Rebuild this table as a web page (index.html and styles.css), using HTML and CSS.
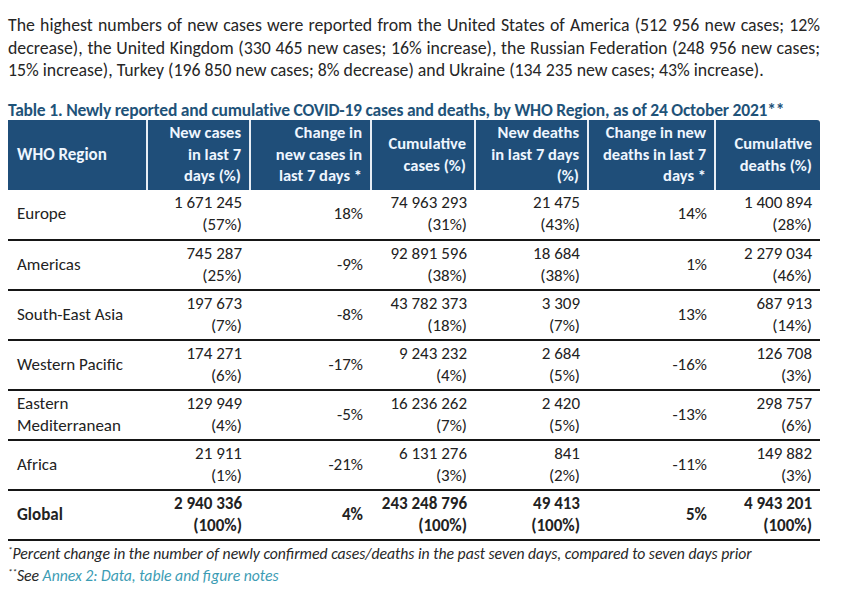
FILE: index.html
```html
<!DOCTYPE html>
<html lang="en">
<head>
<meta charset="utf-8">
<title>COVID-19 weekly table</title>
<link rel="stylesheet" href="styles.css">
</head>
<body>
<div class="page">
  <div class="intro">
    <span class="line just">The highest numbers of new cases were reported from the United States of America (512 956 new cases; 12%</span>
    <span class="line just">decrease), the United Kingdom (330 465 new cases; 16% increase), the Russian Federation (248 956 new cases;</span>
    <span class="line">15% increase), Turkey (196 850 new cases; 8% decrease) and Ukraine (134 235 new cases; 43% increase).</span>
  </div>
  <div class="caption">Table 1. Newly reported and cumulative COVID-19 cases and deaths, by WHO Region, as of 24 October 2021**</div>
  <table class="data">
    <colgroup>
      <col class="c1"><col class="c2"><col class="c3"><col class="c4"><col class="c5"><col class="c6"><col class="c7">
    </colgroup>
    <thead>
      <tr>
        <th class="left">WHO Region</th>
        <th>New cases<br>in last 7<br>days (%)</th>
        <th>Change in<br>new cases in<br>last 7 days *</th>
        <th>Cumulative<br>cases (%)</th>
        <th>New deaths<br>in last 7 days<br>(%)</th>
        <th>Change in new<br>deaths in last 7<br>days *</th>
        <th class="last">Cumulative<br>deaths (%)</th>
      </tr>
    </thead>
    <tbody>
      <tr><td class="left">Europe</td><td>1 671 245<br>(57%)</td><td>18%</td><td>74 963 293<br>(31%)</td><td>21 475<br>(43%)</td><td>14%</td><td>1 400 894<br>(28%)</td></tr>
      <tr><td class="left">Americas</td><td>745 287<br>(25%)</td><td>-9%</td><td>92 891 596<br>(38%)</td><td>18 684<br>(38%)</td><td>1%</td><td>2 279 034<br>(46%)</td></tr>
      <tr><td class="left">South-East Asia</td><td>197 673<br>(7%)</td><td>-8%</td><td>43 782 373<br>(18%)</td><td>3 309<br>(7%)</td><td>13%</td><td>687 913<br>(14%)</td></tr>
      <tr><td class="left">Western Pacific</td><td>174 271<br>(6%)</td><td>-17%</td><td>9 243 232<br>(4%)</td><td>2 684<br>(5%)</td><td>-16%</td><td>126 708<br>(3%)</td></tr>
      <tr><td class="left">Eastern<br>Mediterranean</td><td>129 949<br>(4%)</td><td>-5%</td><td>16 236 262<br>(7%)</td><td>2 420<br>(5%)</td><td>-13%</td><td>298 757<br>(6%)</td></tr>
      <tr><td class="left">Africa</td><td>21 911<br>(1%)</td><td>-21%</td><td>6 131 276<br>(3%)</td><td>841<br>(2%)</td><td>-11%</td><td>149 882<br>(3%)</td></tr>
      <tr class="total"><td class="left">Global</td><td>2 940 336<br>(100%)</td><td>4%</td><td>243 248 796<br>(100%)</td><td>49 413<br>(100%)</td><td>5%</td><td>4 943 201<br>(100%)</td></tr>
    </tbody>
  </table>
  <div class="notes">
    <div class="note"><sup>*</sup>Percent change in the number of newly confirmed cases/deaths in the past seven days, compared to seven days prior</div>
    <div class="note"><sup>**</sup>See <span class="link">Annex 2: Data, table and figure notes</span></div>
  </div>
</div>
</body>
</html>
```

FILE: styles.css
```css
html, body {
  margin: 0;
  padding: 0;
  background: #ffffff;
}

body {
  font-family: Carlito, Lato, "Liberation Sans", sans-serif;
  color: #222222;
}

.page {
  padding: 14px 21px 0 8px;
  width: 812px;
}

.intro {
  font-size: 17.8px;
  line-height: 22.5px;
  color: #262626;
}

.line {
  display: block;
  white-space: nowrap;
}

.line.just {
  white-space: normal;
  text-align: justify;
  text-align-last: justify;
}

.caption {
  position: relative;
  z-index: 1;
  margin-top: 19px;
  font-size: 17.5px;
  font-weight: bold;
  line-height: 19px;
  height: 19px;
  color: #1f5379;
  letter-spacing: -0.2px;
}

.data {
  border-collapse: collapse;
  table-layout: fixed;
  width: 812px;
  font-size: 17px;
}

.c1 { width: 139px; }
.c2 { width: 103px; }
.c3 { width: 121px; }
.c4 { width: 104px; }
.c5 { width: 113px; }
.c6 { width: 127px; }
.c7 { width: 105px; }

.data th {
  background: #1f4e79;
  color: #eef6ff;
  font-weight: bold;
  font-size: 16.5px;
  text-align: right;
  line-height: 21.5px;
  height: 70px;
  padding: 0 8px 0 2px;
  box-sizing: border-box;
  border-right: 2px solid #e8eef5;
  vertical-align: middle;
  white-space: nowrap;
}

.data th.last {
  border-right: none;
  border-top-right-radius: 3px;
}

.data th.left {
  text-align: left;
  padding-left: 9px;
  font-size: 17px;
}

.data td {
  text-align: right;
  line-height: 22px;
  height: 50px;
  padding: 0 8px 0 2px;
  box-sizing: border-box;
  border-bottom: 2px solid #161616;
  vertical-align: middle;
  color: #222222;
  white-space: nowrap;
}

.data td.left {
  text-align: left;
  padding-left: 9px;
}

.data tr.total td {
  font-weight: bold;
}

.notes {
  margin-top: 2px;
}

.note {
  font-style: italic;
  font-size: 15.7px;
  line-height: 22px;
  color: #262626;
}

.note sup {
  font-size: 9px;
  vertical-align: 6px;
  line-height: 0;
}

.link {
  color: #3c9cb4;
}
```
